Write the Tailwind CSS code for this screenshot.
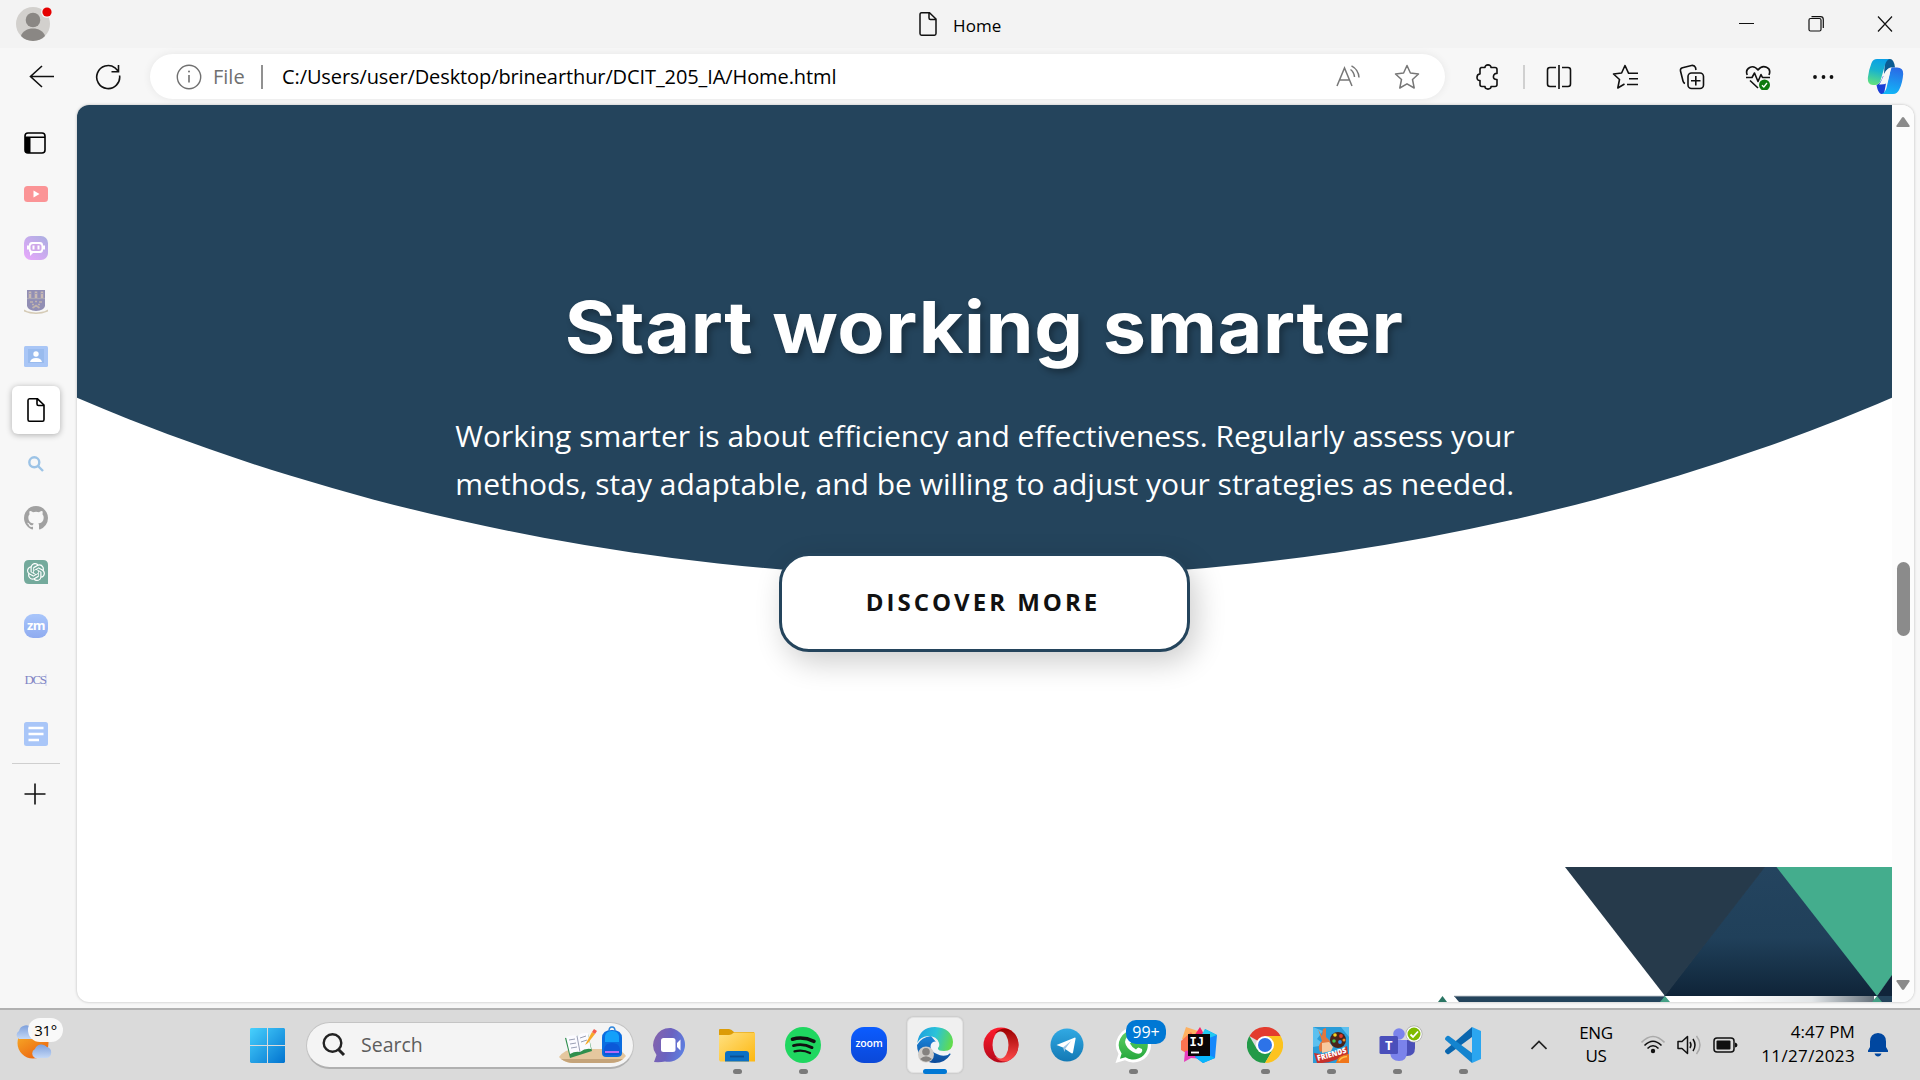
<!DOCTYPE html>
<html lang="en">
<head>
<meta charset="utf-8">
<title>Home</title>
<script src="https://cdn.jsdelivr.net/npm/@tailwindcss/browser@4"></script>
</head>
<body class="w-[1920px] h-[1080px] overflow-hidden flex flex-col bg-[#f7f7f7] font-['Open_Sans',sans-serif] text-black">

<!-- Title bar -->
<header class="h-12 shrink-0 bg-[#f3f3f3] flex items-center">
  <svg class="ml-4 shrink-0" width="38" height="38" viewBox="0 0 38 38">
    <circle cx="17" cy="19" r="17" fill="#d2d0cd"/>
    <circle cx="17" cy="15" r="7.3" fill="#8a8784"/>
    <path d="M5 31c1.500-5 6.500-7.500 12-7.500S27.500 26 29 31c-6 6.500-18 6.500-24 0z" fill="#8a8784"/>
    <circle cx="31" cy="7" r="6" fill="#f3f3f3"/><circle cx="31" cy="7" r="4.600" fill="#e50000"/>
  </svg>
  <svg class="ml-[864px] shrink-0" width="20" height="26" viewBox="0 0 20 26" fill="none" stroke="#111" stroke-width="1.500"><path d="M3.500 1.800H11.500L18 8V22.500Q18 24.200 16.500 24.200H3.500Q2 24.200 2 22.500V3.500Q2 1.800 3.500 1.800zM11 2V7Q11 8.500 12.500 8.500H18"/></svg>
  <span class="ml-[15px] mt-[4px] w-[60px] text-[17px] tracking-[0.1px]">Home</span>
  <svg class="ml-[725px] shrink-0" width="156" height="16" viewBox="0 0 156 16" fill="none" stroke="#111" stroke-width="1.200">
    <path d="M1 7.500H16M140 0.500L154 15.500M154 0.500L140 15.500"/>
    <rect x="71" y="2.500" width="12" height="12.500" rx="1.500"/><path d="M73.500 0.700H82.500Q85.300 0.700 85.300 3.500V12"/>
  </svg>
</header>

<!-- Toolbar -->
<nav class="h-[57px] shrink-0 flex items-center">
  <svg class="ml-[29px] shrink-0" width="26" height="24" viewBox="0 0 26 24" fill="none" stroke="#111" stroke-width="1.600"><path d="M25 11.500H1.500M13 1L1.500 11.500L13 22"/></svg>
  <svg class="ml-[40px] shrink-0" width="26" height="26" viewBox="0 0 26 26" fill="none" stroke="#111" stroke-width="1.600"><path d="M24.600 11.500A11.500 11.500 0 1 1 20 3.800L23.500 7.500M23.500 1V7.700H16.500"/></svg>
  <div class="ml-[29px] w-[1295px] h-[45px] shrink-0 rounded-full bg-white shadow-[0_0_8px_rgba(0,0,0,0.07)] flex items-center">
    <svg class="ml-[26px] shrink-0" width="26" height="26" viewBox="0 0 26 26" fill="none" stroke="#707070" stroke-width="1.400"><circle cx="13" cy="13" r="11.700"/><path d="M13 11V18.500" stroke-width="1.600"/><circle cx="13" cy="7.600" r="1" fill="#707070" stroke="none"/></svg>
    <span class="ml-[11px] w-12 text-[20px] text-[#707070]">File</span>
    <span class="w-[2px] h-6 bg-[#919191]"></span>
    <span class="ml-[19px] w-[640px] whitespace-nowrap text-[20px] tracking-[-0.1px]">C:/Users/user/Desktop/brinearthur/DCIT_205_IA/Home.html</span>
    <svg class="ml-[414px] shrink-0" width="26" height="24" viewBox="0 0 26 24" fill="none" stroke="#777" stroke-width="1.500"><path d="M1 21L8.500 3L16 21M3.500 15H13.500M14.500 4.500Q18 7 18.500 12M15.500 0.800Q22.500 4.500 23 12.500"/></svg>
    <svg class="ml-[32px] shrink-0" width="26" height="26" viewBox="0 0 26 26" fill="none" stroke="#777" stroke-width="1.500" stroke-linejoin="round"><path d="M13 1.500L16.400 9L24.500 10L18.500 15.500L20.200 24L13 19.800L5.800 24L7.500 15.500L1.500 10L9.600 9z"/></svg>
  </div>
  <svg class="ml-[30px] shrink-0" width="26" height="26" viewBox="0 0 26 26" fill="none" stroke="#111" stroke-width="1.600" stroke-linejoin="round"><path d="M6 3.500H10C9.500 0 16.500 0 16 3.500H20Q22 3.500 22 5.500V9.500C18 8.500 16.500 16 22 15.500V20.500Q22 22.500 20 22.500H16C16.500 26 9.500 26 10 22.500H7Q5 22.500 5 20.500V16.500C1 17 1 10 5 10V5.500Q5 3.500 7 3.500z"/></svg>
  <span class="ml-[22px] w-[2px] h-6 bg-[#d0d0d0]"></span>
  <svg class="ml-[21px] shrink-0" width="26" height="26" viewBox="0 0 26 26" fill="none" stroke="#111" stroke-width="1.600"><path d="M10 3.500H4Q1.500 3.500 1.500 6V20Q1.500 22.500 4 22.500H10M13 1V25M16 3.500H22Q24.500 3.500 24.500 6V20Q24.500 22.500 22 22.500H16"/></svg>
  <svg class="ml-[40px] shrink-0" width="27" height="26" viewBox="0 0 27 26" fill="none" stroke="#111" stroke-width="1.600" stroke-linejoin="round"><path d="M19 9.200H16.500L13 1.500L9.600 9L1.500 10L7.500 15.500L5.800 24L12.500 20M16 9.200H26M17 14.700H26M15 20.500H26"/></svg>
  <svg class="ml-[40px] shrink-0" width="26" height="26" viewBox="0 0 26 26" fill="none" stroke="#111" stroke-width="1.600"><rect x="9" y="9" width="15.500" height="15.500" rx="3.500"/><path d="M16.800 12V21.500M12 16.800H21.500M6 19.500Q4.500 19 4 17L1.500 7Q1 4.500 3.500 3.800L12.500 1.500Q15.500 1 16.500 3.500L17 6"/></svg>
  <svg class="ml-[40px] shrink-0" width="27" height="26" viewBox="0 0 27 26" fill="none" stroke="#111" stroke-width="1.600" stroke-linejoin="round"><path d="M2.200 11C-0.500 4 8 -0.500 13 6C18 -0.500 27 3.500 24 11M1 13.500H7L9.500 9L13 17.500L16 10.500L17.500 13.500H25M5 16.500L13 24"/><circle cx="19.500" cy="21" r="5.500" fill="#0f7a10" stroke="none"/><path d="M17 21.200L18.800 23L22 19" stroke="#fff" stroke-width="1.300"/></svg>
  <svg class="ml-[39px] shrink-0" width="26" height="6" viewBox="0 0 26 6" fill="#111"><circle cx="4" cy="3" r="1.900"/><circle cx="12.500" cy="3" r="1.900"/><circle cx="20.500" cy="3" r="1.900"/></svg>
  <svg class="ml-[30px] shrink-0" width="37" height="37" viewBox="0 0 37 37">
    <defs>
      <linearGradient id="cp1" x1="0.500" y1="0" x2="0.300" y2="1"><stop offset="0" stop-color="#0aa0e6"/><stop offset="0.450" stop-color="#1ab4cc"/><stop offset="1" stop-color="#62e27c"/></linearGradient>
      <linearGradient id="cp2" x1="0.600" y1="0" x2="0.400" y2="1"><stop offset="0" stop-color="#2a6ae6"/><stop offset="1" stop-color="#12b6f7"/></linearGradient>
    </defs>
    <path d="M18 1H23Q27 1 28 9.500H24Q20 10 17 16z" fill="#0b5c92"/>
    <path d="M9.500 27Q14 25 16 18L20 20L17 36H14Q11 35 9.500 27z" fill="#1b3fd6"/>
    <path d="M10 1H23Q19.500 1.500 18 7L14 21Q12.500 27 8 27H6Q0.500 27 0.800 20Q2 11 4.500 5Q6 1 10 1z" fill="url(#cp1)"/>
    <path d="M24.500 9.500H30Q36.500 9.500 36.200 16Q35.500 25 32.500 31Q30.500 36 26 36H14.500Q18 35 19.500 30L23 15Q23.700 11 24.500 9.500z" fill="url(#cp2)"/>
    <path d="M18.500 14.500Q20 10.500 24.500 9.500Q23.700 11 22.800 15L20.500 24Q19 26.500 14 26.500H12Q14 24.500 15 21z" fill="#f7f7f7"/>
  </svg>
</nav>

<!-- Sidebar and page -->
<div class="h-[903px] shrink-0 flex">
  <aside class="w-[77px] shrink-0 flex flex-col pt-[11px]">
    <div class="h-[54px] w-[69px] flex items-center justify-center"><svg width="22" height="22" viewBox="0 0 22 22"><rect x="1" y="1" width="20" height="20" rx="3" fill="none" stroke="#000" stroke-width="1.600"/><path d="M1 5H6.500V21H4Q1 21 1 18zM1 4.500H21V6H1z"/></svg></div>
    <div class="h-[54px] w-[72px] -mt-[3px] flex items-center justify-center"><svg width="24" height="16" viewBox="0 0 24 16"><rect width="24" height="16" rx="3.500" fill="#fb9496"/><path d="M9.500 4.500V11.500L15.500 8z" fill="#fff"/></svg></div>
    <div class="h-[54px] w-[72px] flex items-center justify-center"><svg width="24" height="24" viewBox="0 0 24 24"><defs><linearGradient id="poe" x1="1" y1="0" x2="0.200" y2="1"><stop offset="0" stop-color="#a9afe0"/><stop offset="1" stop-color="#e4a8fa"/></linearGradient></defs><rect width="24" height="24" rx="7" fill="url(#poe)"/><rect x="5" y="6" width="14" height="11" rx="3" fill="#fff"/><path d="M3 9.500H21V13.500H3zM6 16V20L9.500 16.500z" fill="#fff"/><rect x="6.500" y="8" width="11" height="7" rx="2.500" fill="#cfa8ea"/><path d="M8.500 9.500H10.500V13.500H8.500zM13.500 9.500H15.500V13.500H13.500z" fill="#fff"/></svg></div>
    <div class="h-[54px] w-[72px] flex items-center justify-center"><svg width="24" height="24" viewBox="0 0 24 24"><path d="M3 0H21V16Q20 20.500 12 21Q4 20.500 3 16z" fill="#918eb4"/><path d="M3 8.500H21" stroke="#aaa7b4" stroke-width="1.300"/><path d="M6 1.500V8M12 1.500V8M18 1.500V8" stroke="#c8b9b4" stroke-width="2.600"/><path d="M4.800 3.500H7.200M10.800 3.500H13.200M16.800 3.500H19.200" stroke="#a09cb8" stroke-width="1.200"/><path d="M6 12H9M15 12H18M11 11.500H13M8 14.500H10M14 14.500H16M8.500 18L12 15.500L15.500 18" stroke="#c0b3ae" stroke-width="1.700" fill="none"/><path d="M0 19.500L3.500 21.300Q12 23.500 20.500 21.300L24 19.500V21.500Q12 26.500 0 21.500z" fill="#d5cbb6"/></svg></div>
    <div class="h-[54px] w-[72px] flex items-center justify-center"><svg width="24" height="21" viewBox="0 0 24 21"><rect width="24" height="21" rx="1.500" fill="#a9c6f6"/><rect x="4" y="3" width="16" height="14" fill="#99bbee"/><circle cx="12" cy="8" r="2.700" fill="#fff"/><path d="M6 16Q7 12 12 12T18 16z" fill="#fff"/></svg></div>
    <div class="h-[54px] w-[72px] flex items-center justify-center"><div class="w-12 h-12 rounded-md bg-white shadow-[0_1px_6px_rgba(0,0,0,0.3)] flex items-center justify-center"><svg width="20" height="26" viewBox="0 0 20 26" fill="none" stroke="#000" stroke-width="1.600"><path d="M3.500 1.800H11.500L18 8V22.500Q18 24.200 16.500 24.200H3.500Q2 24.200 2 22.500V3.500Q2 1.800 3.500 1.800zM11 2V7Q11 8.500 12.500 8.500H18"/></svg></div></div>
    <div class="h-[54px] w-[72px] flex items-center justify-center"><svg width="16" height="16" viewBox="0 0 16 16" fill="none" stroke="#9cc3e6" stroke-width="2.400"><circle cx="6.300" cy="6.300" r="5"/><path d="M10 10L15 15"/></svg></div>
    <div class="h-[54px] w-[72px] flex items-center justify-center"><svg width="24" height="24" viewBox="0 0 24 24"><path fill="#a1a1a1" d="M12 0C5.370 0 0 5.370 0 12c0 5.300 3.440 9.800 8.200 11.390.6.110.82-.26.820-.58v-2.030c-3.340.73-4.040-1.610-4.040-1.610-.55-1.390-1.330-1.760-1.330-1.760-1.090-.74.080-.73.080-.73 1.200.08 1.840 1.240 1.840 1.240 1.070 1.830 2.810 1.300 3.490 1 .11-.78.420-1.310.760-1.610-2.670-.3-5.470-1.330-5.470-5.930 0-1.310.470-2.380 1.240-3.220-.12-.3-.54-1.520.12-3.180 0 0 1.010-.32 3.300 1.230a11.500 11.500 0 0 1 6.010 0c2.290-1.550 3.300-1.230 3.300-1.230.66 1.660.24 2.880.12 3.180.77.840 1.230 1.910 1.230 3.220 0 4.610-2.810 5.620-5.480 5.920.43.370.82 1.100.82 2.220v3.290c0 .32.220.7.830.58A12 12 0 0 0 24 12C24 5.370 18.630 0 12 0z"/></svg></div>
    <div class="h-[54px] w-[72px] flex items-center justify-center"><svg width="24" height="24" viewBox="0 0 24 24"><path d="M5 0H19Q24 0 24 5V24H5Q0 24 0 19V5Q0 0 5 0z" fill="#74aa9c"/><path transform="translate(3 3) scale(0.75)" fill="#fff" d="M22.2819 9.8211a5.9847 5.9847 0 0 0-.5157-4.9108 6.0462 6.0462 0 0 0-6.5098-2.9A6.0651 6.0651 0 0 0 4.9807 4.1818a5.9847 5.9847 0 0 0-3.9977 2.9 6.0462 6.0462 0 0 0 .7427 7.0966 5.98 5.98 0 0 0 .511 4.9107 6.051 6.051 0 0 0 6.5146 2.9001A5.9847 5.9847 0 0 0 13.2599 24a6.0557 6.0557 0 0 0 5.7718-4.2058 5.9894 5.9894 0 0 0 3.9977-2.9001 6.0557 6.0557 0 0 0-.7475-7.0729zm-9.022 12.6081a4.4755 4.4755 0 0 1-2.8764-1.0408l.1419-.0804 4.7783-2.7582a.7948.7948 0 0 0 .3927-.6813v-6.7369l2.02 1.1686a.071.071 0 0 1 .038.052v5.5826a4.504 4.504 0 0 1-4.4945 4.4944zm-9.6607-4.1254a4.4708 4.4708 0 0 1-.5346-3.0137l.142.0852 4.783 2.7582a.7712.7712 0 0 0 .7806 0l5.8428-3.3685v2.3324a.0804.0804 0 0 1-.0332.0615L9.74 19.9502a4.4992 4.4992 0 0 1-6.1408-1.6464zM2.3408 7.8956a4.485 4.485 0 0 1 2.3655-1.9728V11.6a.7664.7664 0 0 0 .3879.6765l5.8144 3.3543-2.0201 1.1685a.0757.0757 0 0 1-.071 0l-4.8303-2.7865A4.504 4.504 0 0 1 2.3408 7.872zm16.5963 3.8558L13.1038 8.364 15.1192 7.2a.0757.0757 0 0 1 .071 0l4.8303 2.7913a4.4944 4.4944 0 0 1-.6765 8.1042v-5.6772a.79.79 0 0 0-.407-.667zm2.0107-3.0231l-.142-.0852-4.7735-2.7818a.7759.7759 0 0 0-.7854 0L9.409 9.2297V6.8974a.0662.0662 0 0 1 .0284-.0615l4.8303-2.7866a4.4992 4.4992 0 0 1 6.6802 4.66zM8.3065 12.863l-2.02-1.1638a.0804.0804 0 0 1-.038-.0567V6.0742a4.4992 4.4992 0 0 1 7.3757-3.4537l-.142.0805L8.704 5.459a.7948.7948 0 0 0-.3927.6813zm1.0976-2.3654l2.602-1.4998 2.6069 1.4998v2.9994l-2.5974 1.4997-2.6067-1.4997Z"/></svg></div>
    <div class="h-[54px] w-[72px] flex items-center justify-center"><div class="size-6 rounded-[9px] bg-linear-to-b from-[#a9c6fb] to-[#8fabf0] text-white text-[13px] font-bold leading-[22px] text-center tracking-[-0.5px]">zm</div></div>
    <div class="h-[54px] w-[72px] flex items-center justify-center"><span class="font-['Liberation_Serif',serif] text-[13px] tracking-[-1.500px] text-[#7f84c4] font-normal border-r-2 border-[#e2e3f2] leading-3">DCS</span></div>
    <div class="h-[54px] w-[72px] flex items-center justify-center"><svg width="24" height="24" viewBox="0 0 24 24"><rect width="24" height="24" rx="2.500" fill="#a9c6f8"/><path d="M4.500 6H19.500M4.500 12H19.500M4.500 18H15" stroke="#fff" stroke-width="2.600"/></svg></div>
    <div class="ml-3 mt-[2px] w-12 h-px bg-[#cfcfcf]"></div>
    <svg class="ml-[24px] mt-[19px]" width="22" height="22" viewBox="0 0 22 22" stroke="#111" stroke-width="1.600"><path d="M11 0.500V21.500M0.500 11H21.500"/></svg>
  </aside>

  <main class="w-[1837px] h-[897px] shrink-0 rounded-[12px] overflow-hidden bg-white shadow-[0_0_3px_rgba(0,0,0,0.25)] flex">
    <section class="relative w-[1815px] h-full shrink-0 flex flex-col items-center">
      <div class="absolute inset-x-0 top-0 h-[473px] bg-[#24445c] [clip-path:ellipse(1815px_1345px_at_50%_-872px)]"></div>
      <h1 class="relative mt-[177px] h-[90px] leading-[90px] whitespace-nowrap font-['Inter',sans-serif] font-bold text-[72px] tracking-[0.6px] scale-x-[1.072] text-white [text-shadow:3px_4px_6px_rgba(0,0,0,0.3)]">Start working smarter</h1>
      <p class="relative mt-[40px] ml-px whitespace-nowrap text-[30px] leading-[48px] text-white">Working smarter is about efficiency and effectiveness. Regularly assess your<br>methods, stay adaptable, and be willing to adjust your strategies as needed.</p>
      <a class="relative mt-[45px] w-[411px] h-[99px] shrink-0 rounded-[30px] border-[3px] border-[#24445c] bg-white shadow-[6px_10px_30px_rgba(0,0,0,0.2)] flex items-center justify-center pr-[3px] pb-[2px] text-[24px] font-bold tracking-[3px] text-[#111]">DISCOVER MORE</a>
      <svg class="mt-auto self-end shrink-0" width="460" height="135" viewBox="1432 867 460 135">
        <defs>
          <linearGradient id="t1" x1="0" y1="0" x2="0" y2="1"><stop offset="0" stop-color="#24445f"/><stop offset="0.550" stop-color="#20405a"/><stop offset="1" stop-color="#0f2438"/></linearGradient>
          <linearGradient id="t2" x1="0" y1="0" x2="1" y2="0"><stop offset="0.300" stop-color="#fff"/><stop offset="0.700" stop-color="#e3e6e8"/><stop offset="1" stop-color="#66727c"/></linearGradient>
        </defs>
        <path d="M1764 867H1779L1878 996H1664z" fill="url(#t1)"/>
        <path d="M1565 867H1765L1665 996z" fill="#263a4b"/>
        <path d="M1776.500 867H1892V976L1877 996z" fill="#44ad8d"/>
        <path d="M1892 975V996H1877z" fill="#10243a"/>
        <path d="M1454 996H1665V1002H1459z" fill="#24445c"/>
        <path d="M1454 996.300H1665" stroke="#7b8b99"/>
        <rect x="1667" y="996" width="207" height="6" fill="url(#t2)"/>
        <path d="M1877 996H1892V1002H1877z" fill="#24445c"/>
        <path d="M1665 996L1670 1002H1660zM1877 996L1882 1002H1872z" fill="#44a085"/>
        <path d="M1442.500 996L1447 1002H1438z" fill="#2a7563"/>
      </svg>
    </section>
    <div class="w-[22px] h-full bg-[#fcfcfc] flex flex-col items-center">
      <svg class="mt-[12px] shrink-0" width="14" height="10" viewBox="0 0 14 10"><path d="M6 0.500Q7 -0.300 8 0.500L13.500 8.500Q14 10 12.500 10H1.500Q0 10 0.500 8.500z" fill="#8b8b8b"/></svg>
      <div class="mt-[435px] w-[13px] h-[74px] rounded-full bg-[#8b8b8b]"></div>
      <svg class="mt-[344px] shrink-0" width="14" height="10" viewBox="0 0 14 10"><path d="M6 9.500Q7 10.300 8 9.500L13.500 1.500Q14 0 12.500 0H1.500Q0 0 0.500 1.500z" fill="#8b8b8b"/></svg>
    </div>
  </main>
</div>

<!-- Taskbar -->
<footer class="h-[72px] shrink-0 border-t-2 border-[#b1b1b1] bg-[#dadada] flex items-center">
  <div class="relative ml-[14px] w-[50px] h-[50px] shrink-0">
    <svg width="50" height="50" viewBox="14 1020 50 50" class="mt-[-1px]"><defs><linearGradient id="sun" x1="0" y1="0" x2="0.600" y2="1"><stop offset="0" stop-color="#f9b82c"/><stop offset="1" stop-color="#ec6710"/></linearGradient><linearGradient id="cl" x1="0" y1="0" x2="0" y2="1"><stop offset="0" stop-color="#7ea0dc"/><stop offset="1" stop-color="#c4d8f6"/></linearGradient></defs><circle cx="33" cy="1044" r="15.500" fill="url(#sun)"/><path d="M19 1040a4.500 4.500 0 0 1 0-8a7 7 0 0 1 13-2v10z" fill="url(#cl)"/><path d="M35 1059a5 5 0 0 1 0-9a7 7 0 0 1 12-2a5.700 5.700 0 0 1 0 11z" fill="url(#cl)"/></svg>
    <div class="absolute left-[14px] -top-[2px] w-[35px] h-6 rounded-full bg-[#fbfbfb]/95 text-[15px] tracking-[-0.3px] leading-6 text-center">31°</div>
  </div>
  <svg class="ml-[186px] shrink-0" width="35" height="35" viewBox="0 0 35 35"><defs><linearGradient id="win" gradientUnits="userSpaceOnUse" x1="0" y1="0" x2="35" y2="35"><stop offset="0" stop-color="#48d1fd"/><stop offset="1" stop-color="#0273cf"/></linearGradient></defs><path fill="url(#win)" d="M1 0H17V17H0V1zM18 0H34L35 1V17H18zM0 18H17V35H1L0 34zM18 18H35V34L34 35H18z"/></svg>
  <div class="ml-[21px] w-[328px] h-[47px] shrink-0 rounded-full bg-[#f4f4f4] border border-[#c4c4c4] border-b-2 border-b-[#b0b0b0] flex items-center">
    <svg class="ml-[15px] shrink-0" width="24" height="24" viewBox="0 0 24 24" fill="none" stroke="#222" stroke-width="2.400"><circle cx="10.500" cy="10" r="8.800"/><path d="M16.500 16.500L22 22" stroke-width="3"/></svg>
    <span class="ml-[15px] w-[198px] text-[19.500px] text-[#5d5d5d]">Search</span>
    <svg class="shrink-0" width="68" height="38" viewBox="0 0 68 38"><path d="M0 31Q6 23 16 23H52Q64 24 67 30Q62 37 50 37H12Q4 36 0 31z" fill="#e5c79e"/><path d="M2 33Q8 37 14 37H50Q60 37 64 33z" fill="#c5a47a"/><path d="M6 12L29 8L33 25L11 32z" fill="#2f8f4d"/><path d="M7 11Q14 8 18 10Q23 6 29 7L32 23Q26 22 21 26Q16 25 11 28z" fill="#fbfbff"/><path d="M18 10L21 26M10 14L16 13M11 18L17 17M12 22L18 21M21 12L27 10M22 16L28 14" stroke="#9a9fb4" stroke-width="1"/><path d="M26 19L33 6L36 8L29 17z" fill="#f7a928"/><path d="M33 6L35 3L38 5L36 8z" fill="#f45b4e"/><path d="M43 12Q43 4 53 4T63 12V27Q63 31 58 31H47Q43 31 43 27z" fill="#0b6de0"/><path d="M46 10Q47 5 53 5T60 10V16H46z" fill="#14a0fa"/><path d="M50 5Q50 1 53 1T56 5" fill="none" stroke="#2d85dc" stroke-width="1.500"/><path d="M45 23Q46 17 53 17T61 23V29H45z" fill="#0c58d8"/><path d="M46 26H60" stroke="#b46bf5" stroke-width="2"/></svg>
  </div>

  <div class="ml-[4px] h-full flex shrink-0 -mt-px">
    <div class="relative w-[66px] flex items-center justify-center"><svg width="36" height="36" viewBox="0 0 36 36"><defs><linearGradient id="ch" x1="0" y1="0.300" x2="1" y2="0.600"><stop offset="0" stop-color="#8463ad"/><stop offset="0.500" stop-color="#6a62c0"/><stop offset="1" stop-color="#5d80e2"/></linearGradient></defs><path d="M18 1A17 17 0 1 1 12 34.500Q7 35.500 1 35L3.500 28A17 17 0 0 1 18 1z" fill="url(#ch)"/><rect x="8" y="11" width="14.500" height="14" rx="2.500" fill="#fff"/><path d="M24 16L27.500 12.500V23.500L24 20z" fill="#fff"/></svg></div>
    <div class="relative w-[66px] flex items-center justify-center"><svg width="36" height="36" viewBox="0 0 36 36"><defs><linearGradient id="fo" x1="0" y1="0" x2="1" y2="1"><stop offset="0" stop-color="#ffe182"/><stop offset="1" stop-color="#fdb70f"/></linearGradient></defs><path d="M0 3Q0 2 1 2H10Q12 2 15 5H35V12H0z" fill="#dc9c07"/><path d="M0 8H10Q12 8 15 5.500H36V34.500H1L0 33z" fill="url(#fo)"/><path d="M6 34.500V27Q6 24 9 24H27Q30 24 30 27V34.500z" fill="#0b70c4"/><path d="M11 29.500H25" stroke="#0b4f92" stroke-width="1.800"/></svg><i class="absolute bottom-[6px] w-[9px] h-[5px] rounded-full bg-[#7a7a7a]"></i></div>
    <div class="relative w-[66px] flex items-center justify-center"><svg width="36" height="36" viewBox="0 0 36 36" fill="none" stroke="#111" stroke-linecap="round"><circle cx="18" cy="18" r="18" fill="#1fd760" stroke="none"/><path d="M7.500 12.200Q18 9 29 14.300" stroke-width="3.600"/><path d="M8.500 18.600Q18 16 27 20.600" stroke-width="2.900"/><path d="M9.500 24.300Q18 22.300 25 26" stroke-width="2.300"/></svg><i class="absolute bottom-[6px] w-[9px] h-[5px] rounded-full bg-[#7a7a7a]"></i></div>
    <div class="relative w-[66px] flex items-center justify-center"><div class="size-9 rounded-[13px] bg-linear-to-b from-[#0b5cff] to-[#0b48d8] text-white text-[10.500px] font-semibold leading-[33px] text-center tracking-[-0.2px]">zoom</div></div>
    <div class="relative w-[66px] flex items-center justify-center"><div class="w-14 h-14 rounded-md bg-[#f0f0f0] border border-[#e2e2e2] shadow-[0_0_2px_rgba(0,0,0,0.2)] flex items-center justify-center"><svg width="36" height="36" viewBox="0 0 36 36"><defs><linearGradient id="ed" x1="0" y1="0.300" x2="1" y2="0.500"><stop offset="0" stop-color="#1e9fe0"/><stop offset="0.500" stop-color="#2bc3d8"/><stop offset="1" stop-color="#62dc4c"/></linearGradient><linearGradient id="ed2" x1="0" y1="0" x2="0" y2="1"><stop offset="0" stop-color="#1a86dc"/><stop offset="1" stop-color="#0c4a98"/></linearGradient></defs><path d="M14 9A18 18 0 0 0 0 18A18 18 0 0 0 18 36Q28 36 33.500 27.500Q34 26 32 26.500Q26 28.500 21 25Q15 21 19 15z" fill="url(#ed2)"/><path d="M0.200 16Q2.500 0 18 0Q35 1 36 15Q36 24 27 24Q21 24 20.500 21.500Q23 19 22 16Q20 9 11 9Q3 10 0.200 16z" fill="url(#ed)"/><path d="M13.500 20Q13.500 15 18 14.500Q22 14.500 22 17.500Q20 21 21.500 23Q25 27 33 25.500L31 28Q25 30 20 27Q14 25 13.500 20z" fill="#f0f4f8"/><circle cx="9" cy="27.500" r="8" fill="#cfccc8"/><circle cx="9" cy="24.800" r="3.800" fill="#85827f"/><path d="M3 32Q9 26.500 15 32Q9 37.500 3 32z" fill="#85827f"/></svg></div><i class="absolute bottom-[6px] w-6 h-[5px] rounded-full bg-[#0078d4]"></i></div>
    <div class="relative w-[66px] flex items-center justify-center"><svg width="36" height="36" viewBox="0 0 36 36"><defs><linearGradient id="op" x1="0" y1="0" x2="0" y2="1"><stop offset="0" stop-color="#ff1b2d"/><stop offset="1" stop-color="#b4091a"/></linearGradient><linearGradient id="op2" x1="0" y1="0" x2="0" y2="1"><stop offset="0" stop-color="#9c0000"/><stop offset="1" stop-color="#ff4b4b"/></linearGradient></defs><ellipse cx="18" cy="18" rx="17.500" ry="17.500" fill="url(#op)"/><path d="M12 6Q18 0 25 2Q35 6 35.500 18Q35 30 25 34Q18 36 12 30Q24 32 24.500 18Q24 4 12 6z" fill="url(#op2)"/><ellipse cx="17.500" cy="18" rx="8" ry="13.500" fill="#dadada"/></svg></div>
    <div class="relative w-[66px] flex items-center justify-center"><svg width="34" height="34" viewBox="0 0 34 34"><defs><linearGradient id="tg" x1="0" y1="0" x2="0" y2="1"><stop offset="0" stop-color="#31a9e3"/><stop offset="1" stop-color="#1379b5"/></linearGradient></defs><circle cx="17" cy="17" r="16.500" fill="url(#tg)"/><path d="M6.500 17L25 9.500Q26 9.500 25.500 11L23 24.500Q22.500 26 21 25L13 19.500z" fill="#fff"/><path d="M13 19.500L21 13L15.500 20.500L14.500 24z" fill="#9ec6e4"/></svg></div>
    <div class="relative w-[66px] flex items-center justify-center"><svg width="36" height="36" viewBox="0 0 36 36"><defs><linearGradient id="wa" x1="0" y1="0" x2="0" y2="1"><stop offset="0" stop-color="#5fd167"/><stop offset="1" stop-color="#27a83d"/></linearGradient></defs><path d="M18.500 0.500A17.500 17.500 0 1 1 10 33.300L0.500 36L3.500 27A17.500 17.500 0 0 1 18.500 0.500z" fill="#fff"/><path d="M18.500 3.500A14.500 14.500 0 1 1 10.500 30.200L5 31.700L6.600 26.500A14.500 14.500 0 0 1 18.500 3.500z" fill="url(#wa)"/><path d="M12 10Q14 9 15 11L16.500 14Q16 16 15 16.500Q17 20.500 21 22.500Q22 21 23.500 20.500L27 22Q28 24 26 26Q23 28 18 25Q11 21 10 15Q10 12 12 10z" fill="#fff"/></svg><span class="absolute left-[26px] top-[10px] w-[40px] h-6 rounded-[10px] bg-[#0078d4] text-white text-[16px] leading-6 text-center">99+</span><i class="absolute bottom-[6px] w-[9px] h-[5px] rounded-full bg-[#7a7a7a]"></i></div>
    <div class="relative w-[66px] flex items-center justify-center"><svg width="36" height="36" viewBox="0 0 36 36"><path d="M5 0L17 4L13 14L1 12z" fill="#fdb060"/><path d="M0 14L10 5L18 18L12 30L0 23z" fill="#fc7350"/><path d="M3 35L4 24L18 22L22 32L10 31z" fill="#e63dbc"/><path d="M13 9L19 0L24 9V14H12z" fill="#f5246a"/><path d="M24 2L36 8L34 31L22 36L14 30L22 12z" fill="#1588fb"/><path d="M24 2L36 8L28 11L20 9z" fill="#22c9f0"/><path d="M28 28L34 31L22 36L14 30z" fill="#08b6fc"/><rect x="7" y="7" width="22" height="22" fill="#0a0506"/><path d="M10 25.500H18" stroke="#fff" stroke-width="1.800"/><text x="8.500" y="18.500" font-family="Liberation Mono" font-weight="bold" font-size="12" fill="#fff">IJ</text></svg></div>
    <div class="relative w-[66px] flex items-center justify-center"><svg width="36" height="36" viewBox="0 0 36 36"><path d="M18 18L2.400 9A18 18 0 0 1 33.600 9z" fill="#e33b2e"/><path d="M2.400 9A18 18 0 0 0 18 36L25.800 22.500L18 18L10.200 22.500z" fill="#229a48"/><path d="M33.600 9A18 18 0 0 1 18 36L25.800 22.500L18 9z" fill="#fcc31e"/><circle cx="18" cy="18" r="9" fill="#fff"/><circle cx="18" cy="18" r="7" fill="#2d73e8"/></svg><i class="absolute bottom-[6px] w-[9px] h-[5px] rounded-full bg-[#7a7a7a]"></i></div>
    <div class="relative w-[66px] flex items-center justify-center"><svg width="36" height="36" viewBox="0 0 36 36"><rect width="36" height="36" fill="#2a9cd8"/><path d="M0 0L10 4L4 12L12 18L0 20zM28 0H36V10z" fill="#5cc0ef"/><path d="M5 2L9 9L10 2L13 1L13 10L17 14L16 22L7 25Q4 18 9 14z" fill="#e4773e"/><path d="M9 16L16 15L20 20L18 24L9 26z" fill="#f7c9a0"/><circle cx="25" cy="13" r="8" fill="#4a241b"/><circle cx="22" cy="8" r="1.800" fill="#f3d321"/><circle cx="28" cy="9" r="1.900" fill="#e33a2b"/><circle cx="21" cy="14" r="1.800" fill="#3fc34e"/><circle cx="27" cy="15" r="1.900" fill="#2c8ff0"/><circle cx="31" cy="13" r="1.500" fill="#f18e23"/><path d="M1 26Q18 30 34 19L35 27Q18 37 4 36z" fill="#c7312b"/><text x="5" y="34" transform="rotate(-16 5 34)" font-family="Open Sans" font-weight="800" font-size="8" textLength="30" lengthAdjust="spacingAndGlyphs" fill="#fff">FRIENDS</text><path d="M23 36Q24 28 36 27V36z" fill="#f0761a"/><path d="M26 34Q28 30 34 29.500" stroke="#ffc24b" stroke-width="1.500" fill="none"/></svg><i class="absolute bottom-[6px] w-[9px] h-[5px] rounded-full bg-[#7a7a7a]"></i></div>
    <div class="relative w-[66px] flex items-center justify-center"><svg width="46" height="40" viewBox="0 0 46 40" class="ml-[6px] mt-[-2px]"><path d="M26 16H38V24Q38 32 30 32H27z" fill="#4b50b8"/><circle cx="22" cy="10" r="5.800" fill="#7b83eb"/><path d="M14 16H30V28Q30 37 22 37T13 29z" fill="#7b83eb"/><rect x="2.500" y="12" width="18.500" height="18" rx="1.500" fill="#4a4fbb"/><text x="11.800" y="26" text-anchor="middle" font-family="Open Sans" font-weight="bold" font-size="13" fill="#fff">T</text><circle cx="37" cy="10" r="8.500" fill="#a8a8a8"/><circle cx="37" cy="10" r="7.800" fill="#fff"/><circle cx="37" cy="10" r="6.500" fill="#7fba00"/><path d="M33.500 10.500L36 13L41 7.500" stroke="#fff" stroke-width="1.800" fill="none"/></svg><i class="absolute bottom-[6px] w-[9px] h-[5px] rounded-full bg-[#7a7a7a]"></i></div>
    <div class="relative w-[66px] flex items-center justify-center"><svg width="36" height="36" viewBox="0 0 36 36"><path d="M27 0L36 4V32L27 36z" fill="#2ba6f0"/><path d="M27 0V10L4 27Q3 27.500 2 27L0.500 25.500Q-0.500 24 0.500 23z" fill="#0a66ae"/><path d="M27 36V26L4 9Q3 8.500 2 9L0.500 10.500Q-0.500 12 0.500 13z" fill="#1484cf"/></svg><i class="absolute bottom-[6px] w-[9px] h-[5px] rounded-full bg-[#7a7a7a]"></i></div>
  </div>

  <svg class="ml-[35px] -mt-px shrink-0" width="16" height="10" viewBox="0 0 16 10" fill="none" stroke="#222" stroke-width="1.700"><path d="M0.500 9L8 1.500L15.500 9"/></svg>
  <div class="ml-[24px] w-[50px] -mt-[2px] text-[17px] leading-[23px] text-center tracking-[-0.3px]">ENG<br>US</div>
  <svg class="ml-[20px] -mt-px shrink-0" width="24" height="20" viewBox="0 0 24 20" fill="none" stroke="#111" stroke-width="1.600"><path d="M0.500 7.500Q12 -4.500 23.500 7.500" stroke="#aaa"/><path d="M3.500 10.500Q12 2 20.500 10.500M6.500 13.500Q12 8 17.500 13.500"/><circle cx="12" cy="16" r="2.200" fill="#111" stroke="none"/></svg>
  <svg class="ml-[12px] -mt-px shrink-0" width="25" height="20" viewBox="0 0 25 20" fill="none" stroke="#111" stroke-width="1.500" stroke-linejoin="round"><path d="M1 6.500H5L10.500 1.500V18.500L5 13.500H1zM13 7Q15 10 13 13M16 4Q20 10 16 16"/><path d="M19.500 1Q26.500 10 19.500 19" stroke="#aaa"/></svg>
  <svg class="ml-[11px] -mt-px shrink-0" width="25" height="16" viewBox="0 0 25 16"><rect x="1" y="1" width="20" height="14" rx="3" fill="none" stroke="#111" stroke-width="1.500"/><rect x="3.500" y="3.500" width="14" height="9" rx="1" fill="#111"/><path d="M22 5.500Q24.500 6 24.500 8T22 10.500z" fill="#111"/></svg>
  <div class="ml-[15px] w-[102px] -mt-[2px] flex flex-col items-end text-[17px] leading-6 whitespace-nowrap"><span class="tracking-[0.1px]">4:47 PM</span><span class="tracking-[0.350px]">11/27/2023</span></div>
  <svg class="ml-[13px] -mt-px shrink-0" width="20" height="24" viewBox="0 0 20 24"><path d="M10 0Q18 0.500 18 8.500V14L20 17.500V19H0V17.500L2 14V8.500Q2 0.500 10 0zM6.500 20.500H13.500Q12.500 23.500 10 23.500T6.500 20.500z" fill="#0047a0"/></svg>
</footer>
</body>
</html>
